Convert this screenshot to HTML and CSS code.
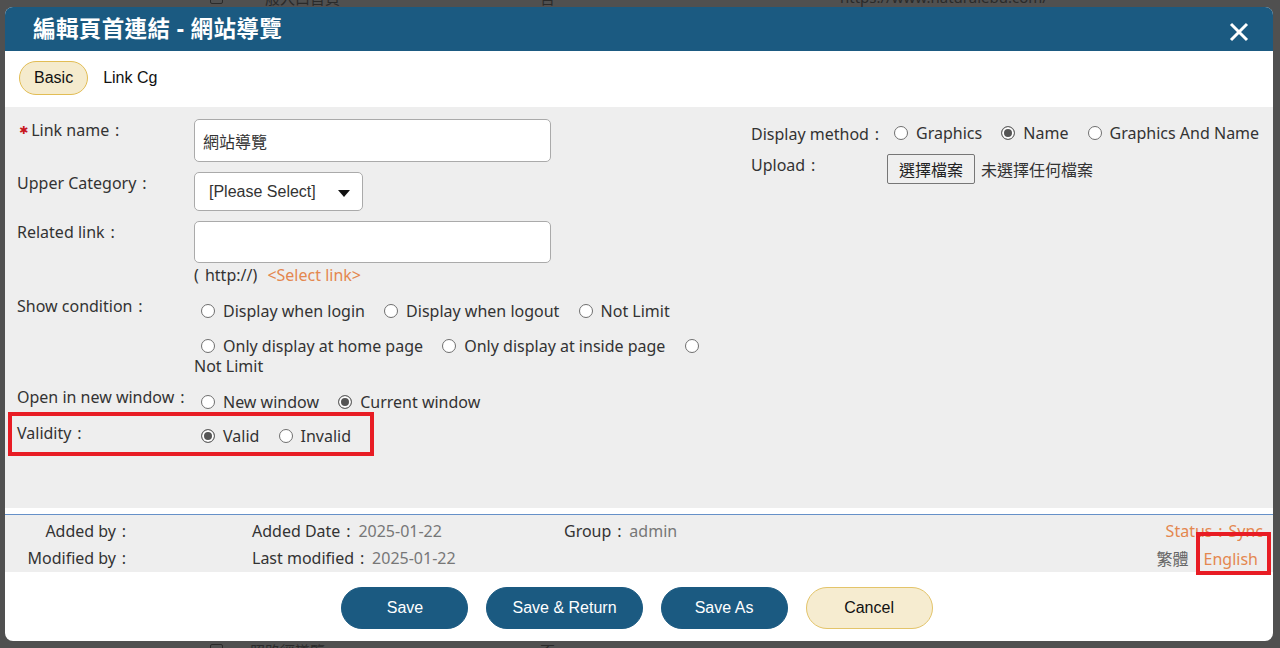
FILE: index.html
```html
<!DOCTYPE html>
<html lang="zh-Hant">
<head>
    <meta charset="UTF-8">
    <title>編輯頁首連結 - 網站導覽</title>
    <link rel="stylesheet" href="styles.css">
</head>
<body>
<!-- 後面的列表頁（被遮罩蓋住） -->
<div class="bg-page">
    <div class="bg-row bg-row-top">
        <span class="bg-check"></span>
        <span class="bg-name">一般入口首頁</span>
        <span class="bg-flag">否</span>
        <span class="bg-url">https://www.naturalebu.com/</span>
    </div>
    <div class="bg-row bg-row-bottom">
        <span class="bg-check"></span>
        <span class="bg-name">照路徑導覽</span>
        <span class="bg-flag">否</span>
    </div>
</div>

<div class="modal">
    <div class="modal-head">
        <h1 class="modal-title">編輯頁首連結 - 網站導覽</h1>
        <button class="close" type="button">
            <svg width="20" height="20" viewBox="0 0 20 20">
                <path d="M2 2 L18 18 M18 2 L2 18" stroke="#fff" stroke-width="3" fill="none"/>
            </svg>
        </button>
    </div>

    <div class="tabs">
        <span class="tab active">Basic</span>
        <span class="tab">Link Cg</span>
    </div>

    <div class="form">
        <div class="col-left">
            <div class="row">
                <div class="row-label"><span class="req">✱</span>Link name<span class="c">:</span></div>
                <div class="row-field">
                    <input class="text-input" type="text" value="網站導覽">
                </div>
            </div>
            <div class="row">
                <div class="row-label">Upper Category<span class="c">:</span></div>
                <div class="row-field">
                    <div class="select-wrap">
                        <select class="select">
                            <option>[Please Select]</option>
                        </select>
                    </div>
                </div>
            </div>
            <div class="row">
                <div class="row-label">Related link<span class="c">:</span></div>
                <div class="row-field">
                    <input class="text-input link-input" type="text" value="">
                    <div class="note">( http://) <a class="orange" href="#">&lt;Select link&gt;</a></div>
                </div>
            </div>
            <div class="row">
                <div class="row-label">Show condition<span class="c">:</span></div>
                <div class="row-field opts-field">
                    <div class="opts">
                        <label><input type="radio" name="show"><span class="nw">Display when login</span></label>
                        <label><input type="radio" name="show"><span class="nw">Display when logout</span></label>
                        <label><input type="radio" name="show"><span class="nw">Not Limit</span></label>
                    </div>
                    <div class="opts">
                        <label><input type="radio" name="page"><span class="nw">Only display at home page</span></label>
                        <label><input type="radio" name="page"><span class="nw">Only display at inside page</span></label>
                        <label><input type="radio" name="page"> <span class="nw">Not Limit</span></label>
                    </div>
                </div>
            </div>
            <div class="row">
                <div class="row-label">Open in new window<span class="c">:</span></div>
                <div class="row-field opts-field">
                    <div class="opts">
                        <label><input type="radio" name="win"><span class="nw">New window</span></label>
                        <label><input type="radio" name="win" checked><span class="nw">Current window</span></label>
                    </div>
                </div>
            </div>
            <div class="row">
                <div class="row-label">Validity<span class="c">:</span></div>
                <div class="row-field opts-field valid-field">
                    <div class="opts">
                        <label><input type="radio" name="valid" checked><span class="nw">Valid</span></label>
                        <label><input type="radio" name="valid"><span class="nw">Invalid</span></label>
                    </div>
                </div>
            </div>
        </div>

        <div class="col-right">
            <div class="row">
                <div class="row-label side-label">Display method<span class="c">:</span></div>
                <div class="row-field">
                    <div class="opts">
                        <label><input type="radio" name="disp"><span class="nw">Graphics</span></label>
                        <label><input type="radio" name="disp" checked><span class="nw">Name</span></label>
                        <label><input type="radio" name="disp"><span class="nw">Graphics And Name</span></label>
                    </div>
                </div>
            </div>
            <div class="row">
                <div class="row-label side-label">Upload<span class="c">:</span></div>
                <div class="row-field upload">
                    <button class="file-btn" type="button">選擇檔案</button>
                    <span class="file-name">未選擇任何檔案</span>
                </div>
            </div>
        </div>
    </div>

    <div class="info">
        <div class="info-who">Added by<span class="c">:</span></div>
        <div>Added Date<span class="c">:</span><span class="val">2025-01-22</span></div>
        <div>Group<span class="c">:</span><span class="val">admin</span></div>
        <div class="info-side"><span class="orange">Status<span class="c">:</span>Sync</span></div>
        <div class="info-who">Modified by<span class="c">:</span></div>
        <div>Last modified<span class="c">:</span><span class="val">2025-01-22</span></div>
        <div></div>
        <div class="info-side lang"><span class="val-dim">繁體</span><a class="orange" href="#">English</a></div>
    </div>

    <div class="actions">
        <button class="btn" type="button">Save</button>
        <button class="btn" type="button">Save &amp; Return</button>
        <button class="btn" type="button">Save As</button>
        <button class="btn btn-cancel" type="button">Cancel</button>
    </div>

    <!-- 紅框標示 -->
    <div class="mark mark-validity"></div>
    <div class="mark mark-lang"></div>
</div>
</body>
</html>
```

FILE: styles.css
```css
* {
    margin: 0;
    padding: 0;
    box-sizing: border-box;
}
body {
    width: 1280px;
    height: 648px;
    overflow: hidden;
    background: #505050;
    font-family: "Noto Sans", "Noto Sans CJK TC", sans-serif;
    font-size: 16px;
    color: #333;
}
a {
    text-decoration: none;
}
.orange {
    color: #e4874f;
}
/* 全形冒號的寬度 */
.c {
    display: inline-block;
    width: 16px;
    text-align: center;
}

/* 背景頁 */
.bg-page {
    height: 648px;
    display: flex;
    flex-direction: column;
    justify-content: space-between;
}
.bg-row {
    display: flex;
    align-items: center;
    height: 20px;
    padding-left: 210px;
    color: #2a2a2a;
    font-size: 15px;
}
.bg-row-top {
    margin-top: -13px;
}
.bg-row-bottom {
    margin-bottom: -12px;
}
.bg-check {
    width: 13px;
    height: 13px;
    border: 1px solid #2a2a2a;
    border-radius: 2px;
    margin-right: 27px;
}
.bg-name {
    width: 290px;
}
.bg-flag {
    width: 300px;
}

/* 對話框 */
.modal {
    position: absolute;
    left: 5px;
    top: 7px;
    width: 1268px;
    height: 634px;
    background: #fff;
    border-radius: 8px;
    overflow: hidden;
    display: flex;
    flex-direction: column;
}
.modal-head {
    height: 44px;
    flex: none;
    background: #1b5a81;
    display: flex;
    align-items: center;
    justify-content: space-between;
    padding: 0 24px 0 28px;
}
.modal-title {
    color: #fff;
    font-size: 22.5px;
    font-weight: 700;
    letter-spacing: 0.4px;
    line-height: 30px;
}
.close {
    background: none;
    border: 0;
    width: 20px;
    height: 20px;
    margin-top: 5px;
    display: flex;
}

.tabs {
    height: 56px;
    flex: none;
    display: flex;
    align-items: flex-start;
    padding: 10px 14px 0;
}
.tab {
    height: 34px;
    line-height: 32px;
    padding: 0 14px;
    border: 1px solid transparent;
    border-radius: 17px;
    font-family: "Liberation Sans", "Noto Sans CJK TC", sans-serif;
    color: #111;
}
.tab.active {
    background: #f5ebcd;
    border-color: #e2bd55;
}

/* 表單 */
.form {
    height: 401px;
    flex: none;
    background: #eee;
    display: grid;
    grid-template-columns: 740px 1fr;
    padding-top: 12px;
}
.col-left {
    padding-left: 12px;
}
.col-right {
    padding: 4px 0 0 6px;
}
.row {
    display: flex;
    margin-bottom: 10px;
    line-height: 20px;
}
.row-label {
    width: 177px;
    flex: none;
    padding-top: 1px;
    white-space: nowrap;
}
.side-label {
    width: 136px;
}
.row-field {
    flex: 1;
    min-width: 0;
}
.req {
    color: #c8171e;
    font-family: "DejaVu Sans", sans-serif;
    font-size: 11px;
    vertical-align: 2px;
    margin: 0 3px 0 2px;
}
.text-input {
    display: block;
    width: 357px;
    height: 43px;
    border: 1px solid #aaa;
    border-radius: 5px;
    background: #fff;
    padding: 0 8px;
    font-family: "Noto Sans CJK TC", sans-serif;
    font-size: 16px;
    color: #333;
    outline: none;
}
.link-input {
    height: 42px;
}
.note {
    margin-top: 2px;
    word-spacing: 2px;
}
.note a {
    margin-left: 4px;
    word-spacing: 0;
}
.select-wrap {
    position: relative;
    width: 169px;
    height: 39px;
}
.select {
    -webkit-appearance: none;
    appearance: none;
    width: 100%;
    height: 100%;
    border: 1px solid #aaa;
    border-radius: 5px;
    background: #fff;
    padding-left: 14px;
    font-family: "Liberation Sans", sans-serif;
    font-size: 16px;
    color: #333;
    outline: none;
}
.select-wrap::after {
    content: "";
    position: absolute;
    left: 144px;
    top: 18px;
    border-left: 6px solid transparent;
    border-right: 6px solid transparent;
    border-top: 7px solid #111;
}

/* 單選 */
.opts-field {
    padding-top: 6px;
}
.valid-field {
    padding-top: 4px;
}
.opts {
    line-height: 20px;
    margin-bottom: 15px;
}
.opts:last-child {
    margin-bottom: 0;
}
.opts label {
    margin-right: 8px;
}
.opts label:last-child {
    margin-right: 0;
}
.nw {
    white-space: nowrap;
}
.opts input[type="radio"] {
    -webkit-appearance: none;
    appearance: none;
    display: inline-block;
    width: 14px;
    height: 14px;
    border: 1px solid #6f6f6f;
    border-radius: 50%;
    background: #fff;
    margin: 0 8px 0 7px;
    vertical-align: -1px;
}
.opts input[type="radio"]:checked {
    background: #555;
    box-shadow: inset 0 0 0 2px #fff;
    border-color: #666;
}

.upload {
    display: flex;
    align-items: center;
}
.file-btn {
    height: 30px;
    padding: 0 11px;
    border: 1px solid #767676;
    border-radius: 2px;
    background: #efefef;
    font-family: "Noto Sans CJK TC", sans-serif;
    font-size: 16px;
    color: #222;
}
.file-name {
    margin-left: 6px;
    font-family: "Noto Sans CJK TC", sans-serif;
}

/* 紀錄資訊 */
.info {
    height: 58px;
    flex: none;
    margin-top: 6px;
    border-top: 1px solid #6590c8;
    background: #eee;
    display: grid;
    grid-template-columns: 247px 312px 1fr auto;
    row-gap: 7px;
    padding: 6px 10px 0 0;
    line-height: 20px;
    align-content: start;
}
.info-who {
    text-align: right;
    padding-right: 120px;
}
.val {
    color: #777;
    margin-left: 2px;
}
.val-dim {
    color: #666;
    font-family: "Noto Sans CJK TC", sans-serif;
}
.info-side {
    text-align: right;
}
.lang {
    padding-right: 5px;
}
.lang a {
    margin-left: 15px;
}

/* 按鈕 */
.actions {
    flex: 1;
    display: flex;
    justify-content: center;
    align-items: flex-start;
    gap: 18px;
    padding: 15px 4px 0 0;
}
.btn {
    height: 42px;
    min-width: 127px;
    padding: 0 25px;
    border: 1px solid #1b5a81;
    border-radius: 21px;
    background: #1b5a81;
    color: #fff;
    font-family: "Liberation Sans", sans-serif;
    font-size: 16px;
}
.btn-cancel {
    background: #f6ecd0;
    border-color: #e3c46a;
    color: #111;
}

/* 紅框 */
.mark {
    position: absolute;
    border: 4px solid #e81c24;
}
.mark-validity {
    left: 3px;
    top: 405px;
    width: 366px;
    height: 44px;
}
.mark-lang {
    left: 1191px;
    top: 525px;
    width: 75px;
    height: 43px;
}
```
